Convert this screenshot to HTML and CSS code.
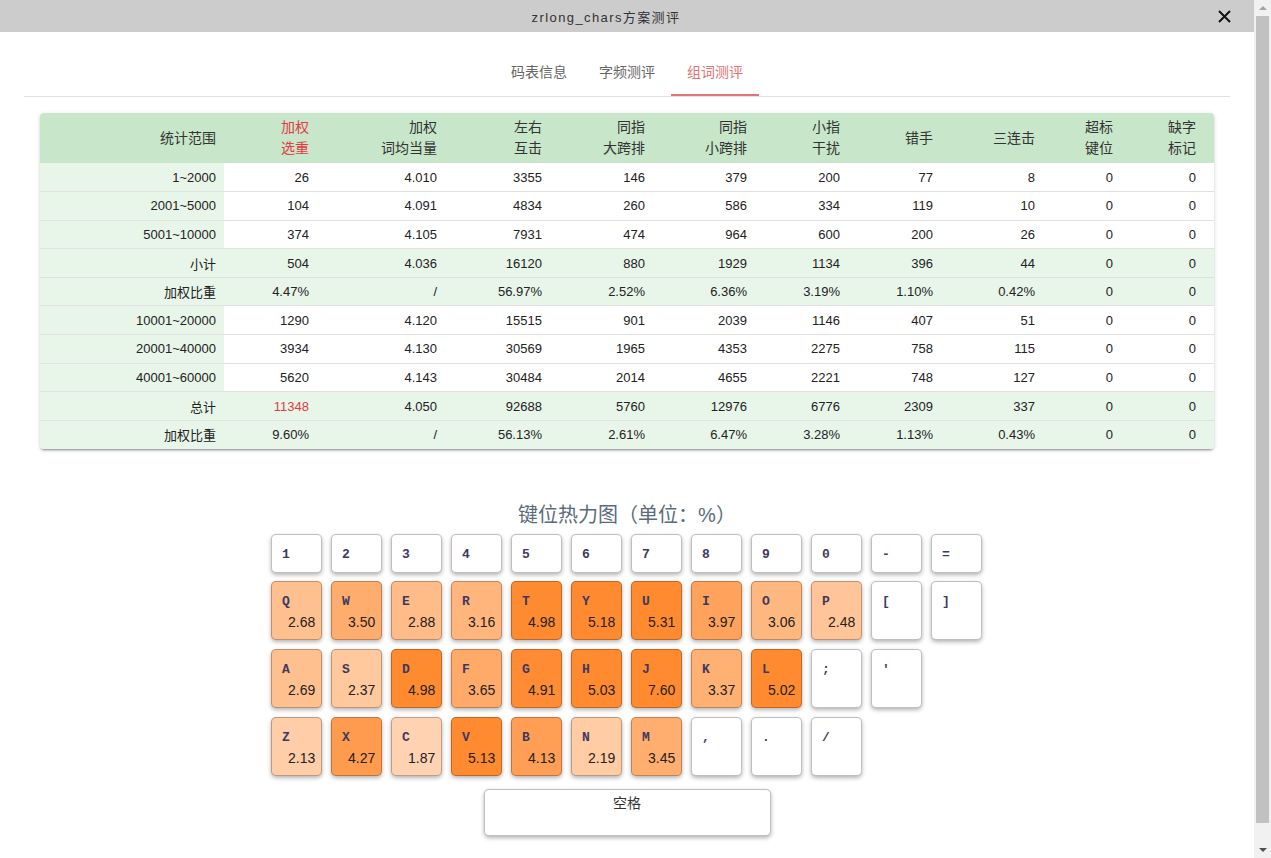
FILE: index.html
```html
<!DOCTYPE html>
<html lang="zh">
<head>
<meta charset="utf-8">
<title>zrlong_chars方案测评</title>
<link rel="stylesheet" href="styles.css">
</head>
<body>
<div class="window">
  <div class="app">
    <header class="titlebar">
      <div class="title">zrlong_chars方案测评</div>
      <div class="close">
        <svg width="13" height="13" viewBox="0 0 13 13"><path d="M1 1 L12 12 M12 1 L1 12" stroke="#111" stroke-width="2" fill="none"/></svg>
      </div>
    </header>

    <nav class="tabs">
      <div class="tab">码表信息</div>
      <div class="tab">字频测评</div>
      <div class="tab active">组词测评</div>
    </nav>

    <div class="card">
      <table class="stats">
        <colgroup>
          <col class="c1"><col class="c2"><col class="c3"><col class="c4"><col class="c5"><col class="c6"><col class="c7"><col class="c8"><col class="c9"><col class="c10"><col class="c11">
        </colgroup>
        <thead>
          <tr>
            <th>统计范围</th>
            <th class="red">加权<br>选重</th>
            <th>加权<br>词均当量</th>
            <th>左右<br>互击</th>
            <th>同指<br>大跨排</th>
            <th>同指<br>小跨排</th>
            <th>小指<br>干扰</th>
            <th>错手</th>
            <th>三连击</th>
            <th>超标<br>键位</th>
            <th>缺字<br>标记</th>
          </tr>
        </thead>
        <tbody>
          <tr><td>1~2000</td><td>26</td><td>4.010</td><td>3355</td><td>146</td><td>379</td><td>200</td><td>77</td><td>8</td><td>0</td><td>0</td></tr>
          <tr><td>2001~5000</td><td>104</td><td>4.091</td><td>4834</td><td>260</td><td>586</td><td>334</td><td>119</td><td>10</td><td>0</td><td>0</td></tr>
          <tr><td>5001~10000</td><td>374</td><td>4.105</td><td>7931</td><td>474</td><td>964</td><td>600</td><td>200</td><td>26</td><td>0</td><td>0</td></tr>
          <tr class="sum"><td>小计</td><td>504</td><td>4.036</td><td>16120</td><td>880</td><td>1929</td><td>1134</td><td>396</td><td>44</td><td>0</td><td>0</td></tr>
          <tr class="sum"><td>加权比重</td><td>4.47%</td><td>/</td><td>56.97%</td><td>2.52%</td><td>6.36%</td><td>3.19%</td><td>1.10%</td><td>0.42%</td><td>0</td><td>0</td></tr>
          <tr><td>10001~20000</td><td>1290</td><td>4.120</td><td>15515</td><td>901</td><td>2039</td><td>1146</td><td>407</td><td>51</td><td>0</td><td>0</td></tr>
          <tr><td>20001~40000</td><td>3934</td><td>4.130</td><td>30569</td><td>1965</td><td>4353</td><td>2275</td><td>758</td><td>115</td><td>0</td><td>0</td></tr>
          <tr><td>40001~60000</td><td>5620</td><td>4.143</td><td>30484</td><td>2014</td><td>4655</td><td>2221</td><td>748</td><td>127</td><td>0</td><td>0</td></tr>
          <tr class="sum"><td>总计</td><td class="red">11348</td><td>4.050</td><td>92688</td><td>5760</td><td>12976</td><td>6776</td><td>2309</td><td>337</td><td>0</td><td>0</td></tr>
          <tr class="sum"><td>加权比重</td><td>9.60%</td><td>/</td><td>56.13%</td><td>2.61%</td><td>6.47%</td><td>3.28%</td><td>1.13%</td><td>0.43%</td><td>0</td><td>0</td></tr>
        </tbody>
      </table>
    </div>

    <h2 class="heat-title">键位热力图（单位：%）</h2>

    <div class="keyboard">
      <div class="krow short">
        <div class="key"><span class="lbl">1</span></div>
        <div class="key"><span class="lbl">2</span></div>
        <div class="key"><span class="lbl">3</span></div>
        <div class="key"><span class="lbl">4</span></div>
        <div class="key"><span class="lbl">5</span></div>
        <div class="key"><span class="lbl">6</span></div>
        <div class="key"><span class="lbl">7</span></div>
        <div class="key"><span class="lbl">8</span></div>
        <div class="key"><span class="lbl">9</span></div>
        <div class="key"><span class="lbl">0</span></div>
        <div class="key"><span class="lbl">-</span></div>
        <div class="key"><span class="lbl">=</span></div>
      </div>
      <div class="krow">
        <div class="key heat" style="background:rgb(255,192,144)"><span class="lbl">Q</span><span class="val">2.68</span></div>
        <div class="key heat" style="background:rgb(255,173,110)"><span class="lbl">W</span><span class="val">3.50</span></div>
        <div class="key heat" style="background:rgb(255,188,136)"><span class="lbl">E</span><span class="val">2.88</span></div>
        <div class="key heat" style="background:rgb(255,181,124)"><span class="lbl">R</span><span class="val">3.16</span></div>
        <div class="key heat" style="background:rgb(255,139,49)"><span class="lbl">T</span><span class="val">4.98</span></div>
        <div class="key heat" style="background:rgb(255,138,48)"><span class="lbl">Y</span><span class="val">5.18</span></div>
        <div class="key heat" style="background:rgb(255,138,48)"><span class="lbl">U</span><span class="val">5.31</span></div>
        <div class="key heat" style="background:rgb(255,162,91)"><span class="lbl">I</span><span class="val">3.97</span></div>
        <div class="key heat" style="background:rgb(255,183,128)"><span class="lbl">O</span><span class="val">3.06</span></div>
        <div class="key heat" style="background:rgb(255,197,152)"><span class="lbl">P</span><span class="val">2.48</span></div>
        <div class="key"><span class="lbl">[</span></div>
        <div class="key"><span class="lbl">]</span></div>
      </div>
      <div class="krow">
        <div class="key heat" style="background:rgb(255,192,144)"><span class="lbl">A</span><span class="val">2.69</span></div>
        <div class="key heat" style="background:rgb(255,200,157)"><span class="lbl">S</span><span class="val">2.37</span></div>
        <div class="key heat" style="background:rgb(255,139,49)"><span class="lbl">D</span><span class="val">4.98</span></div>
        <div class="key heat" style="background:rgb(255,170,104)"><span class="lbl">F</span><span class="val">3.65</span></div>
        <div class="key heat" style="background:rgb(255,140,52)"><span class="lbl">G</span><span class="val">4.91</span></div>
        <div class="key heat" style="background:rgb(255,138,48)"><span class="lbl">H</span><span class="val">5.03</span></div>
        <div class="key heat" style="background:rgb(255,138,48)"><span class="lbl">J</span><span class="val">7.60</span></div>
        <div class="key heat" style="background:rgb(255,176,115)"><span class="lbl">K</span><span class="val">3.37</span></div>
        <div class="key heat" style="background:rgb(255,138,48)"><span class="lbl">L</span><span class="val">5.02</span></div>
        <div class="key"><span class="lbl">;</span></div>
        <div class="key"><span class="lbl">'</span></div>
      </div>
      <div class="krow">
        <div class="key heat" style="background:rgb(255,205,167)"><span class="lbl">Z</span><span class="val">2.13</span></div>
        <div class="key heat" style="background:rgb(255,155,78)"><span class="lbl">X</span><span class="val">4.27</span></div>
        <div class="key heat" style="background:rgb(255,211,178)"><span class="lbl">C</span><span class="val">1.87</span></div>
        <div class="key heat" style="background:rgb(255,138,48)"><span class="lbl">V</span><span class="val">5.13</span></div>
        <div class="key heat" style="background:rgb(255,158,84)"><span class="lbl">B</span><span class="val">4.13</span></div>
        <div class="key heat" style="background:rgb(255,204,164)"><span class="lbl">N</span><span class="val">2.19</span></div>
        <div class="key heat" style="background:rgb(255,174,112)"><span class="lbl">M</span><span class="val">3.45</span></div>
        <div class="key"><span class="lbl">,</span></div>
        <div class="key"><span class="lbl">.</span></div>
        <div class="key"><span class="lbl">/</span></div>
      </div>
      <div class="space-row">
        <div class="space">空格</div>
      </div>
    </div>
  </div>
  <div class="scrollbar">
    <div class="arrow up"></div>
    <div class="track"><div class="thumb"></div></div>
    <div class="arrow down"></div>
  </div>
</div>
</body>
</html>
```

FILE: styles.css
```css
* { box-sizing: border-box; }

html, body {
  margin: 0;
  padding: 0;
  background: #ffffff;
}

body {
  font-family: "Liberation Sans", "Noto Sans CJK SC", sans-serif;
  color: #222;
}

.window {
  display: flex;
  width: 1271px;
  height: 858px;
  overflow: hidden;
}

.app {
  flex: 0 0 1254px;
  display: flex;
  flex-direction: column;
  background: #fff;
}

/* title bar */
.titlebar {
  height: 32px;
  flex: 0 0 32px;
  background: #cccccc;
  display: flex;
  align-items: center;
}

.title {
  flex: 1;
  text-align: center;
  font-size: 13px;
  letter-spacing: 1.4px;
  color: #333;
}

.close {
  flex: 0 0 42px;
  display: flex;
  align-items: center;
  padding-left: 6px;
  height: 32px;
}

.close svg { display: block; }

/* tabs */
.tabs {
  margin: 16px 24px 0;
  height: 49px;
  flex: 0 0 49px;
  display: flex;
  justify-content: center;
  border-bottom: 1px solid #e0e0e0;
}

.tab {
  padding: 0 16px;
  line-height: 48px;
  height: 48px;
  font-size: 14px;
  color: #666;
}

.tab.active {
  color: #e57373;
  box-shadow: inset 0 -2px 0 #e57373;
}

/* table card */
.card {
  margin: 16px 40px 0;
  border-radius: 4px;
  overflow: hidden;
  background: #fff;
  box-shadow: 0 3px 1px -2px rgba(0,0,0,.2), 0 2px 2px 0 rgba(0,0,0,.14), 0 1px 5px 0 rgba(0,0,0,.12);
}

.stats {
  width: 100%;
  border-collapse: collapse;
  table-layout: fixed;
}

.c1 { width: 184px; }
.c2 { width: 93px; }
.c3 { width: 128px; }
.c4 { width: 105px; }
.c5 { width: 103px; }
.c6 { width: 102px; }
.c7 { width: 93px; }
.c8 { width: 93px; }
.c9 { width: 102px; }
.c10 { width: 78px; }
.c11 { width: 93px; }

.stats th {
  background: #c8e6c9;
  height: 50px;
  padding: 0 8px 0 0;
  text-align: right;
  font-weight: normal;
  font-size: 14px;
  line-height: 21px;
  color: #333;
}

.stats td {
  height: 28.6px;
  padding: 0 8px 0 0;
  text-align: right;
  font-size: 13px;
  color: #222;
  border-top: 1px solid #e0e0e0;
}

.stats tbody tr:first-child td { border-top: none; }

.stats th:last-child,
.stats td:last-child { padding-right: 18px; }

.stats td:first-child { background: #e8f5e9; }

.stats tr.sum td { background: #e8f5e9; }

.stats .red { color: #e53945; }

/* heat map */
.heat-title {
  margin: 52px 0 0;
  text-align: center;
  font-size: 20px;
  line-height: 28px;
  font-weight: normal;
  color: #5b6b7b;
}

.keyboard {
  width: 712px;
  margin: 5px auto 0;
  display: flex;
  flex-direction: column;
  gap: 9px;
}

.krow {
  display: flex;
  gap: 9px;
}

.krow.short { margin-bottom: -1px; }

.key {
  flex: 0 0 51px;
  width: 51px;
  height: 59px;
  border: 1px solid rgba(0,0,0,.25);
  border-radius: 5px;
  background: #fff;
  box-shadow: 0 2px 4px rgba(0,0,0,.3);
  padding: 10px 0 0 10px;
  display: flex;
  flex-direction: column;
}

.krow.short .key { height: 39px; }

.lbl {
  font-family: "Liberation Mono", "DejaVu Sans Mono", monospace;
  font-weight: bold;
  font-size: 13px;
  line-height: 20px;
  color: #3d3960;
}

.val {
  font-size: 14px;
  line-height: 20px;
  padding-left: 6px;
  color: #222;
}

.space-row {
  display: flex;
  justify-content: center;
  margin-top: 4px;
}

.space {
  width: 287px;
  height: 47px;
  border: 1px solid rgba(0,0,0,.25);
  border-radius: 5px;
  background: #fff;
  box-shadow: 0 2px 4px rgba(0,0,0,.3);
  text-align: center;
  padding-top: 3px;
  font-size: 14px;
  line-height: 20px;
  color: #333;
}

/* scrollbar */
.scrollbar {
  flex: 0 0 17px;
  background: #f1f1f1;
  display: flex;
  flex-direction: column;
  align-items: center;
}

.arrow {
  flex: 0 0 16px;
  width: 17px;
  display: flex;
  align-items: center;
  justify-content: center;
}

.arrow::before {
  content: "";
  width: 0;
  height: 0;
  border-left: 4px solid transparent;
  border-right: 4px solid transparent;
}

.arrow.up::before { border-bottom: 4px solid #a3a3a3; }
.arrow.down::before { border-top: 4px solid #505050; }

.track {
  flex: 1;
  width: 17px;
  padding: 0 2px 19px;
  display: flex;
}

.thumb {
  flex: 1;
  background: #c1c1c1;
}
```
